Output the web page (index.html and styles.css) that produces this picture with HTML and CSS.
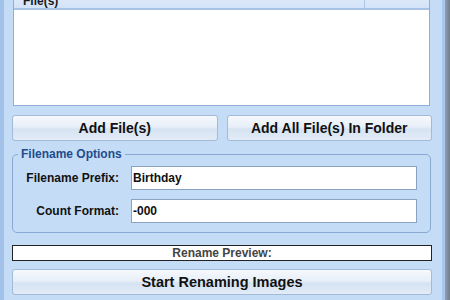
FILE: index.html
```html
<!DOCTYPE html>
<html lang="en">
  <head>
    <meta charset="UTF-8" />
    <title>Rename Images</title>
    <link rel="stylesheet" href="styles.css">
  </head>
  <body>
    <div class="window">
      <div class="content">
        <!-- File list -->
        <div class="file-list">
          <div class="list-header">
            <div class="col-name">File(s)</div>
            <div class="col-extra"></div>
          </div>
          <div class="list-body"></div>
        </div>

        <div class="button-row">
          <button class="btn">Add File(s)</button>
          <button class="btn">Add All File(s) In Folder</button>
        </div>

        <fieldset class="options">
          <legend>Filename Options</legend>
          <label class="field-label" for="prefix">Filename Prefix:</label>
          <input class="field-input" id="prefix" type="text" value="Birthday" />
          <label class="field-label" for="count">Count Format:</label>
          <input class="field-input" id="count" type="text" value="-000" />
        </fieldset>

        <div class="preview">Rename Preview:</div>

        <button class="btn btn-wide">Start Renaming Images</button>
      </div>
      <div class="frame-right"></div>
    </div>
  </body>
</html>
```

FILE: styles.css
```css
* {
  margin: 0;
  padding: 0;
  box-sizing: border-box;
}

body {
  font-family: "Liberation Sans", Arial, sans-serif;
  background: #c5dcf6;
  width: 450px;
  height: 300px;
  overflow: hidden;
}

.window {
  display: flex;
  height: 300px;
  border-left: 4px solid #a3c2ea;
  background: #c5dcf6;
}

.content {
  width: 420px;
  margin-left: 8px;
  margin-top: -12px;
  display: flex;
  flex-direction: column;
}

.frame-right {
  margin-left: 10px;
  width: 8px;
  border-left: 3px solid #a9c6ec;
  background: linear-gradient(90deg, #8f9fb0, #6f7d8b);
}

/* File list */
.file-list {
  margin: 0 2px 0 1px;
  height: 118px;
  border: 1px solid #8fafd8;
  background: #fff;
  display: flex;
  flex-direction: column;
}

.list-header {
  display: flex;
  height: 21px;
  background: linear-gradient(#e6effb, #d3e3f8);
  border-bottom: 2px solid #a9c3e6;
  font-size: 12px;
  font-weight: bold;
  color: #1b1b1b;
}

.col-name {
  width: 351px;
  padding: 5px 0 0 9px;
  border-right: 1px solid #aec6e6;
}

.col-extra {
  flex: 1;
}

.list-body {
  flex: 1;
}

/* Buttons */
.button-row {
  display: flex;
  gap: 9px;
  margin-top: 9px;
}

.btn {
  flex: 1;
  height: 26px;
  border: 1px solid #a3bad8;
  border-radius: 3px;
  background: linear-gradient(#f6f9fd 0%, #e8eff8 45%, #d6e3f2 55%, #e3ecf7 100%);
  font-family: "Liberation Sans", Arial, sans-serif;
  font-size: 14px;
  font-weight: bold;
  color: #111;
}

.btn-wide {
  flex: none;
  width: 420px;
  margin-top: 8px;
  font-size: 14.5px;
}

/* Options group */
.options {
  margin-top: 6px;
  border: 1px solid #8aa9d2;
  border-radius: 5px;
  padding: 5px 13px 9px 0;
  display: grid;
  grid-template-columns: 106px 1fr;
  column-gap: 12px;
  row-gap: 9px;
  align-items: center;
  width: 419px;
}

.options legend {
  margin-left: 5px;
  padding: 0 3px;
  font-size: 12px;
  font-weight: bold;
  color: #1f4c8c;
}

.field-label {
  text-align: right;
  font-size: 12px;
  font-weight: bold;
  color: #111;
}

.field-input {
  height: 24px;
  border: 1px solid #8aa3c0;
  padding-left: 1px;
  font-family: "Liberation Sans", Arial, sans-serif;
  font-size: 12px;
  font-weight: bold;
  color: #111;
  background: #fff;
}

/* Preview */
.preview {
  margin-top: 12px;
  height: 16px;
  border: 1px solid #222;
  background: #fff;
  text-align: center;
  font-size: 12px;
  font-weight: bold;
  color: #444;
  line-height: 14px;
}
```
